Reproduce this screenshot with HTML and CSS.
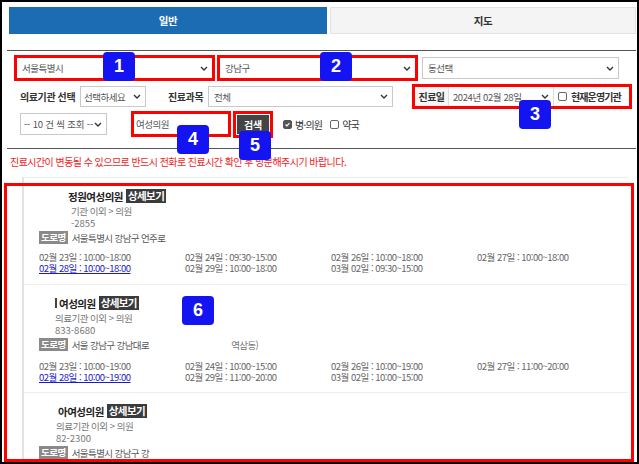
FILE: index.html
```html
<!DOCTYPE html>
<html lang="ko">
<head>
<meta charset="utf-8">
<title>병의원 찾기</title>
<link rel="stylesheet" href="styles.css">
</head>
<body>
<div class="frame">
  <div class="tabs">
    <div class="tab tab-on">일반</div>
    <div class="tab tab-off">지도</div>
  </div>

  <div class="filter">
    <div class="row row1">
      <div class="sel sel-wide mark"><span>서울특별시</span><svg class="chev" viewBox="0 0 8 5"><path d="M1 1l3 3 3-3"/></svg></div>
      <div class="sel sel-wide mark"><span>강남구</span><svg class="chev" viewBox="0 0 8 5"><path d="M1 1l3 3 3-3"/></svg></div>
      <div class="sel sel-wide"><span>동선택</span><svg class="chev" viewBox="0 0 8 5"><path d="M1 1l3 3 3-3"/></svg></div>
    </div>

    <div class="row row2">
      <span class="lbl lbl-inst">의료기관 선택</span>
      <div class="sel sel-inst"><span>선택하세요</span><svg class="chev" viewBox="0 0 8 5"><path d="M1 1l3 3 3-3"/></svg></div>
      <span class="lbl lbl-subj">진료과목</span>
      <div class="sel sel-subj"><span>전체</span><svg class="chev" viewBox="0 0 8 5"><path d="M1 1l3 3 3-3"/></svg></div>
      <div class="datebox mark">
        <span class="date-lbl">진료일</span>
        <div class="sel sel-date"><span>2024년 02월 28일</span><svg class="chev" viewBox="0 0 8 5"><path d="M1 1l3 3 3-3"/></svg></div>
        <label class="date-chk"><span class="chk"></span>현재운영기관</label>
      </div>
    </div>

    <div class="row row3">
      <div class="sel sel-count"><span>-- 10 건 씩 조회 --</span><svg class="chev" viewBox="0 0 8 5"><path d="M1 1l3 3 3-3"/></svg></div>
      <div class="kw mark">여성의원</div>
      <button class="btn">검색</button>
      <label class="opt"><span class="chk on"><svg viewBox="0 0 9 9"><path d="M2 4.5l1.8 1.8L7 2.8"/></svg></span>병·의원</label>
      <label class="opt opt2"><span class="chk"></span>약국</label>
    </div>
  </div>

  <p class="notice">진료시간이 변동될 수 있으므로 반드시 전화로 진료시간 확인 후 방문해주시기 바랍니다.</p>

  <ul class="list">
    <li class="item">
      <div class="head head-a">
        <div class="name"><span class="nm">정원여성의원</span><span class="more">상세보기</span></div>
        <div class="cat">기관 이외 &gt; 의원</div>
        <div class="tel">-2855</div>
      </div>
      <div class="road"><span class="road-tag">도로명</span><span class="addr">서울특별시 강남구 언주로</span></div>
      <div class="hours">
        <span>02월 23일 : 10:00~18:00</span>
        <span>02월 24일 : 09:30~15:00</span>
        <span>02월 26일 : 10:00~18:00</span>
        <span>02월 27일 : 10:00~18:00</span>
        <a class="today" href="#">02월 28일 : 10:00~18:00</a>
        <span>02월 29일 : 10:00~18:00</span>
        <span>03월 02일 : 09:30~15:00</span>
      </div>
    </li>
    <li class="item">
      <div class="head">
        <div class="name"><span class="cutbar"></span><span class="nm">여성의원</span><span class="more">상세보기</span></div>
        <div class="cat">의료기관 이외 &gt; 의원</div>
        <div class="tel">833-8680</div>
      </div>
      <div class="road"><span class="road-tag">도로명</span><span class="addr">서울 강남구 강남대로</span><span class="addr addr-tail">역삼동)</span></div>
      <div class="hours">
        <span>02월 23일 : 10:00~19:00</span>
        <span>02월 24일 : 10:00~15:00</span>
        <span>02월 26일 : 10:00~19:00</span>
        <span>02월 27일 : 11:00~20:00</span>
        <a class="today" href="#">02월 28일 : 10:00~19:00</a>
        <span>02월 29일 : 11:00~20:00</span>
        <span>03월 02일 : 10:00~15:00</span>
      </div>
    </li>
    <li class="item">
      <div class="head head-c">
        <div class="name"><span class="nm">아여성의원</span><span class="more">상세보기</span></div>
        <div class="cat">의료기관 이외 &gt; 의원</div>
        <div class="tel">82-2300</div>
      </div>
      <div class="road"><span class="road-tag">도로명</span><span class="addr">서울특별시 강남구 강</span></div>
    </li>
  </ul>

  <div class="hl-list"></div>
  <div class="badge b1">1</div>
  <div class="badge b2">2</div>
  <div class="badge b3">3</div>
  <div class="badge b4">4</div>
  <div class="badge b5">5</div>
  <div class="badge b6">6</div>
</div>
</body>
</html>
```

FILE: styles.css
```css
* { box-sizing: border-box; }
html, body { margin: 0; padding: 0; background: #fff; }
body {
  font-family: "Noto Sans CJK KR", "Noto Sans", sans-serif;
  color: #333;
}
.frame {
  position: relative;
  width: 639px;
  height: 464px;
  border: 2px solid #000;
  padding: 5px 1px 0 5px;
  overflow: hidden;
  background: #fff;
}

/* tabs */
.tabs {
  display: grid;
  grid-template-columns: 318px 1fr;
  gap: 3px;
  height: 27px;
  margin-left: 2px;
}
.tab {
  display: flex;
  align-items: center;
  justify-content: center;
  font-size: 10.5px;
  font-weight: 700;
  letter-spacing: -0.3px;
}
.tab-on { background: #1b6cb3; color: #fff; }
.tab-off { background: #f4f4f4; border: 1px solid #e2e2e2; color: #333; }

/* filter */
.filter {
  margin-top: 16px;
  border-top: 1px solid #555;
  border-bottom: 1px solid #555;
  padding: 6px 0 13px 9px;
}
.row { display: flex; align-items: center; }
.row1 { height: 22px; gap: 6px; }
.row2 { height: 21px; margin-top: 7px; padding-left: 4px; }
.row3 { height: 22px; margin-top: 6px; padding-left: 4px; }

.sel {
  display: flex;
  align-items: center;
  justify-content: space-between;
  height: 100%;
  border: 1px solid #c9c9c9;
  background: #fff;
  padding: 0 4px 0 5px;
  font-size: 9.5px;
  letter-spacing: -0.5px;
  color: #555;
  white-space: nowrap;
}
.chev { width: 8px; height: 5px; flex: none; }
.chev path { fill: none; stroke: #333; stroke-width: 1.4; }
.sel-wide { width: 197px; }

.mark { outline: 3px solid #f00; outline-offset: -1px; }

.lbl {
  font-size: 10px;
  font-weight: 700;
  letter-spacing: -0.4px;
  color: #333;
  white-space: nowrap;
}
.lbl-inst { width: 60px; }
.sel-inst { width: 66px; padding-left: 3px; }
.lbl-subj { width: 40px; margin-left: 22px; }
.sel-subj { width: 185px; }

.datebox {
  display: flex;
  height: 100%;
  width: 216px;
  margin-left: 21px;
  border: 1px solid #ccc;
}
.date-lbl {
  width: 34px;
  display: flex;
  align-items: center;
  justify-content: center;
  background: #f6f6f6;
  border-right: 1px solid #ddd;
  font-size: 10px;
  font-weight: 700;
  letter-spacing: -0.6px;
  color: #333;
}
.sel-date {
  width: 105px;
  border: none;
  border-right: 1px solid #ddd;
  letter-spacing: -0.4px;
  padding-left: 4px;
}
.date-chk {
  flex: 1;
  display: flex;
  align-items: center;
  gap: 4px;
  padding-left: 4px;
  font-size: 10px;
  font-weight: 700;
  letter-spacing: -0.9px;
  color: #333;
}

.chk {
  width: 9px;
  height: 9px;
  flex: none;
  border: 1px solid #666;
  border-radius: 2px;
  background: #fff;
  display: flex;
}
.chk.on { background: #555; border-color: #555; }
.chk svg { width: 7px; height: 7px; }
.chk svg path { fill: none; stroke: #fff; stroke-width: 1.5; }

.sel-count { width: 87px; padding-left: 3px; letter-spacing: -0.2px; }
.kw {
  width: 96px;
  height: 100%;
  margin-left: 26px;
  border: 1px solid #ccc;
  display: flex;
  align-items: center;
  padding-left: 2px;
  font-size: 9.5px;
  letter-spacing: -0.5px;
  color: #555;
}
.btn {
  width: 32px;
  height: 19px;
  margin-left: 8px;
  padding: 0;
  border: none;
  background: #444;
  color: #fff;
  font-family: inherit;
  font-size: 10px;
  font-weight: 700;
  letter-spacing: -0.3px;
  outline: 3px solid #f00;
  outline-offset: 1px;
}
.opt {
  display: flex;
  align-items: center;
  gap: 3px;
  margin-left: 14px;
  font-size: 10px;
  letter-spacing: -0.8px;
  color: #333;
}
.opt2 { margin-left: 8px; }

.notice {
  margin: 7px 0 9px 3px;
  font-size: 10px;
  line-height: 12px;
  letter-spacing: -0.55px;
  color: #f01c1c;
  white-space: nowrap;
}

/* list */
.list {
  list-style: none;
  margin: 0 8px 0 15px;
  padding: 0;
  border-left: 2px solid #e3e3e3;
  border-top: 1px solid #eee;
}
.item {
  border-bottom: 1px solid #eee;
  padding: 11px 0 10px 15px;
}
.item:nth-child(2) .hours { margin-top: 10px; }
.item:nth-child(2) { padding-bottom: 9px; }
.head { padding-left: 16px; }
.head-a { padding-left: 29px; }
.head-a .cat, .head-a .tel { padding-left: 3px; }
.head-c { padding-left: 19px; }
.head-c .cat, .head-c .tel { margin-left: -2px; }
.name {
  display: flex;
  align-items: center;
  gap: 3px;
  height: 14px;
  margin-bottom: 2px;
}
.nm {
  font-size: 10.5px;
  font-weight: 700;
  letter-spacing: -0.5px;
  color: #222;
}
.more {
  height: 14px;
  line-height: 14px;
  padding: 0 2px;
  background: #3b3b3b;
  color: #fff;
  font-size: 10.5px;
  font-weight: 700;
  letter-spacing: -0.6px;
}
.cutbar { width: 2px; height: 10px; background: #444; margin-right: -1px; }
.cat, .tel {
  font-size: 9.5px;
  line-height: 12px;
  letter-spacing: -0.5px;
  color: #777;
}
.tel { letter-spacing: 0; }
.road {
  display: flex;
  align-items: center;
  gap: 4px;
  height: 13px;
  margin-top: 2px;
}
.road-tag {
  height: 13px;
  line-height: 13px;
  padding: 0 2px;
  background: #8a8a8a;
  color: #fff;
  font-size: 9.5px;
  font-weight: 700;
  letter-spacing: -0.5px;
}
.addr {
  font-size: 9.5px;
  letter-spacing: -0.6px;
  color: #555;
}
.addr-tail { margin-left: 78px; color: #777; }
.hours {
  display: grid;
  grid-template-columns: repeat(4, 146px);
  margin-top: 8px;
  font-size: 9.5px;
  line-height: 11px;
  letter-spacing: -0.5px;
  color: #666;
  white-space: nowrap;
}
.today { color: #1a1acc; text-decoration: underline; }

/* annotation overlays */
.hl-list {
  position: absolute;
  left: 2px;
  top: 181px;
  width: 630px;
  height: 279px;
  border: 3px solid #f00;
}
.badge {
  position: absolute;
  width: 32px;
  height: 29px;
  border-radius: 4px;
  background: #1414f2;
  color: #fff;
  font-family: "Liberation Sans", Arial, sans-serif;
  font-size: 18px;
  font-weight: 700;
  display: flex;
  align-items: center;
  justify-content: center;
}
.b1 { left: 101px; top: 50px; }
.b2 { left: 318px; top: 50px; }
.b3 { left: 517px; top: 98px; }
.b4 { left: 175px; top: 123px; }
.b5 { left: 237px; top: 129px; }
.b6 { left: 180px; top: 294px; }
```
